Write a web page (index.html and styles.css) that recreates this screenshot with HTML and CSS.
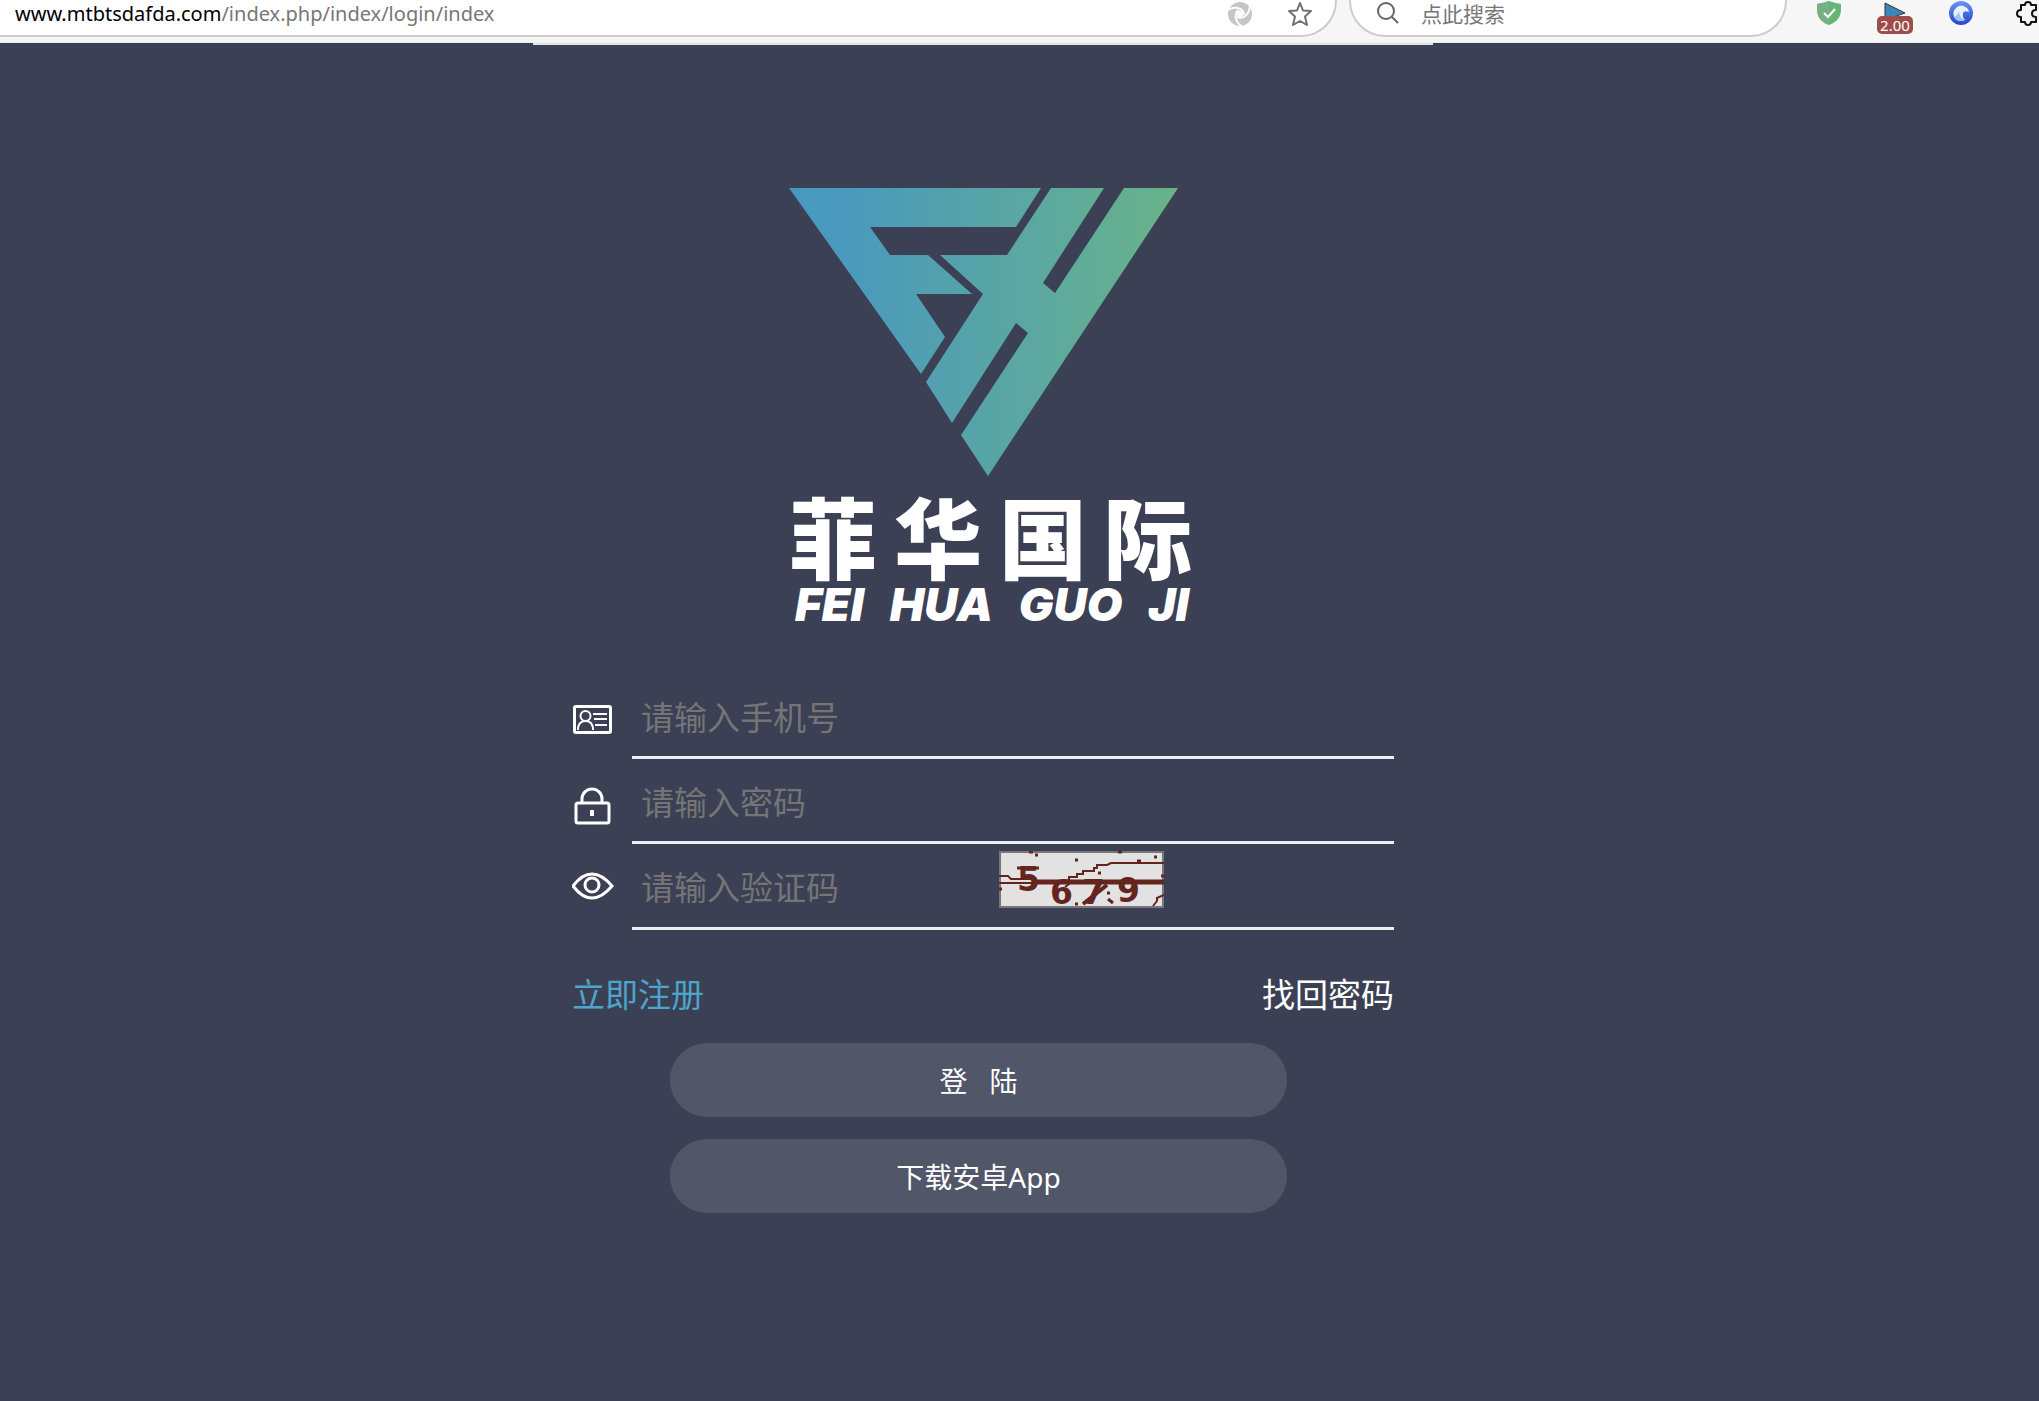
FILE: index.html
```html
<!DOCTYPE html>
<html lang="zh-CN">
<head>
<meta charset="utf-8">
<title>菲华国际</title>
<link rel="stylesheet" href="styles.css">
</head>
<body>
<header class="toolbar">
  <div class="address">
    <a class="url" href="#"><span class="host">www.mtbtsdafda.com</span>/index.php/index/login/index</a>
    <button class="tool" type="button" aria-label="兼容模式">
      <svg width="26" height="26" viewBox="0 0 26 26"><circle cx="13" cy="13" r="12" fill="#c6c6c6"/><g fill="none" stroke="#fff" stroke-width="2"><path d="M0 9Q8 5 13 8Q17 10 17 14"/><path d="M0 9Q8 5 13 8Q17 10 17 14" transform="rotate(120 13 13)"/><path d="M0 9Q8 5 13 8Q17 10 17 14" transform="rotate(240 13 13)"/></g><circle cx="13" cy="13" r="3" fill="#fff"/></svg>
    </button>
    <button class="tool" type="button" aria-label="收藏">
      <svg width="26" height="26" viewBox="0 0 26 26" fill="none" stroke="#707070" stroke-width="2" stroke-linejoin="round"><path d="M13 2L16 9.500L24 10L18 15.500L20 24L13 20L6 24L8 15.500L2 10L10 9.500Z"/></svg>
    </button>
  </div>
  <label class="search">
    <svg width="24" height="24" viewBox="0 0 24 24" fill="none" stroke="#666" stroke-width="2"><circle cx="9" cy="9" r="8"/><path d="M14.500 14.500L21 21"/></svg>
    <input class="search-input" type="search" placeholder="点此搜索" aria-label="点此搜索">
  </label>
  <nav class="extensions">
    <button class="tool" type="button" aria-label="安全防护">
      <svg width="24" height="26" viewBox="0 0 24 26"><path d="M12 1Q17 3 24 4V11Q23 21 12 25Q1 21 0 11V4Q7 3 12 1Z" fill="#66b574"/><path d="M12 1Q7 3 0 4V11Q1 21 12 25Z" fill="#74b082"/><path d="M7 13L11 17L18 9" fill="none" stroke="#fff" stroke-width="2"/></svg>
    </button>
    <button class="tool speed" type="button" aria-label="播放速度">
      <svg width="24" height="26" viewBox="0 0 24 26"><path d="M2 3L22 13L2 20Z" fill="#3f86b8" stroke="#333"/></svg>
      <span class="badge">2.00</span>
    </button>
    <button class="tool" type="button" aria-label="扩展">
      <svg width="24" height="26" viewBox="0 0 24 26"><defs><linearGradient id="ball" x1="0" y1="0" x2="0" y2="1"><stop offset="0" stop-color="#6a94f0"/><stop offset="1" stop-color="#2547cf"/></linearGradient></defs><circle cx="12" cy="13" r="12" fill="url(#ball)"/><path d="M5 17Q3 11 8 7Q13 3 19 9L20 12Q15 10 14 13Q13 17 16 20Q9 23 5 17Z" fill="#e9f2fe"/><path d="M5 17Q9 15 10 11Q10 18 16 20Q9 23 5 17Z" fill="#9cc4f5"/></svg>
    </button>
    <button class="tool" type="button" aria-label="插件">
      <svg width="24" height="26" viewBox="0 0 24 26" fill="none" stroke="#111" stroke-width="2" stroke-linejoin="round"><path d="M6 5H10Q10 2 13 2Q16 2 16 5H21V10Q17 10 17 13.500Q17 17 21 17V22H16Q16 25 13 25Q10 25 10 22H6V17Q2 17 2 13.500Q2 10 6 10Z"/></svg>
    </button>
  </nav>
</header>
<main class="page">
  <section class="panel">
    <h1 class="brand">
      <svg class="mark" width="390" height="290" viewBox="0 0 390 290" aria-hidden="true">
        <defs><linearGradient id="g" gradientUnits="userSpaceOnUse" x1="0" y1="0" x2="390" y2="0"><stop offset="0" stop-color="#4798c2"/><stop offset=".18" stop-color="#4b9abb"/><stop offset=".5" stop-color="#57a4a8"/><stop offset="1" stop-color="#69b388"/></linearGradient></defs>
        <g fill="url(#g)"><path d="M0 0H252L227 39H81L101 67H139L183 106H127L156 149L132 186Z"/><path d="M262 0H315L254 95L266 105L335 0H389L199 288L172 247L239 145L227 135L163 235L137 194L194 106L151 67H218Z"/></g>
      </svg>
      <span class="brand-cn"><span>菲</span><span>华</span><span>国</span><span>际</span></span>
      <span class="brand-en"><span>FEI</span> <span>HUA</span> <span>GUO</span> <span>JI</span></span>
    </h1>
    <form class="form">
      <div class="field">
        <label class="field-icon" for="phone" aria-label="手机号"><svg width="42" height="42" viewBox="0 0 42 42" fill="none" stroke="#fff" stroke-width="2"><rect x="2" y="7" width="37" height="27" rx="2"/><rect x="3" y="8" width="35" height="25" rx="1"/><circle cx="13.500" cy="17" r="5"/><path d="M6 31Q6 22 13.500 22Q21 22 21 31M21 15H35M22 20H35M23 26H35"/></svg></label>
        <input class="input" id="phone" type="tel" placeholder="请输入手机号">
      </div>
      <div class="field">
        <label class="field-icon" for="password" aria-label="密码"><svg width="42" height="42" viewBox="0 0 42 42" fill="none" stroke="#fff" stroke-width="3"><rect x="4" y="19" width="33" height="20" rx="2"/><path d="M10 19V15A10 10 0 0 1 30 15V19"/><path d="M20 26V32" stroke-width="4"/></svg></label>
        <input class="input" id="password" type="password" placeholder="请输入密码">
      </div>
      <div class="field field-last">
        <label class="field-icon" for="captcha" aria-label="验证码"><svg width="42" height="42" viewBox="0 0 42 42" fill="none" stroke="#fff" stroke-width="3"><path d="M1 17Q10 5 20 5Q30 5 40 17Q30 29 20 29Q10 29 1 17Z"/><circle cx="20" cy="16" r="7"/></svg></label>
        <div class="captcha-line">
          <input class="input captcha-input" id="captcha" type="text" placeholder="请输入验证码">
          <svg class="captcha" width="165" height="57" viewBox="0 0 165 57" role="img" aria-label="验证码图片">
            <rect x="1" y="1" width="163" height="55" fill="#e2e2e2" stroke="#777" stroke-width="2"/>
            <g class="captcha-digits"><text x="18" y="40">5</text><text x="51" y="53">6</text><text x="83" y="53">7</text><text x="118" y="51">9</text></g>
            <g fill="none" stroke="#65251f" stroke-width="2"><path d="M0 25H9L12 28H36M0 32H38M66 36L70 33V26H78V23H84V20H95V17H98V14H108L112 12H165M154 55L158 50V47L165 44"/><path d="M84 53L108 34" stroke-width="4"/><path d="M18 17H40" stroke-width="3"/><path d="M36 31H165" stroke-width="5"/><path d="M30 1H34M36 4H39M76 9H79M99 22H102M119 1H123M138 10H142M155 6H158M0 38H3M108 42H111M109 48L114 52M76 53H79M162 25H165" stroke-width="3"/></g>
          </svg>
        </div>
      </div>
      <div class="links"><a class="register" href="#">立即注册</a><a class="recover" href="#">找回密码</a></div>
      <div class="actions">
        <button class="action" type="submit">登&nbsp;&nbsp; 陆</button>
        <button class="action" type="button">下载安卓App</button>
      </div>
    </form>
  </section>
</main>
</body>
</html>
```
FILE: styles.css
```css
* { box-sizing: border-box; }
body { margin: 0; min-height: 100vh; background: #3b4054; font-family: "Noto Sans", "Noto Sans CJK SC", sans-serif; }
button, input { font: inherit; }
button { border: 0; padding: 0; cursor: pointer; }
a { text-decoration: none; }
svg { display: block; flex: none; }

.toolbar { display: flex; gap: 12px; height: 43px; padding-bottom: 5px; background: #f6f6f6; border-bottom: 1px solid #e8ecea; }
.address { flex: 1; display: flex; align-items: center; gap: 34px; padding: 0 22px 8px 15px; background: #fff; border: solid #ccc; border-width: 0 2px 2px 0; border-radius: 0 0 36px 0; }
.url { flex: 1; font-size: 20px; line-height: 26px; color: #777; }
.host { color: #000; }
.tool { position: relative; background: none; }
.search { display: flex; align-items: center; gap: 20px; width: 438px; padding: 0 26px 8px; background: #fff; border: solid #ccc; border-width: 0 2px 2px; border-radius: 0 0 36px 36px; }
.search-input { flex: 1; min-width: 0; border: 0; padding: 0; background: none; font-size: 21px; line-height: 26px; outline: 0; }
.search-input::placeholder { color: #777; opacity: 1; }
.extensions { display: flex; align-items: flex-start; gap: 42px; padding-left: 18px; }
.badge { position: absolute; left: -6px; top: 16px; width: 36px; height: 18px; border-radius: 5px; background: #9f4d4b; color: #fff; font-size: 15px; line-height: 18px; }

.page { display: flex; justify-content: center; padding-right: 73px; }
.panel { width: 900px; padding: 143px 39px 60px; border-top: 2px solid #e4e6e8; }

.brand { display: flex; flex-direction: column; width: 404px; margin: 0 auto 50px; padding-left: 8px; color: #fff; }
.brand-cn { display: flex; gap: 17px; margin-top: 14px; font-size: 88px; line-height: 92px; font-weight: 900; }
.brand-en { display: flex; justify-content: space-between; width: 400px; padding-left: 6px; font: italic 900 46px/40px "Inter", sans-serif; white-space: nowrap; }

.form { display: flex; flex-direction: column; }
.field { display: flex; height: 85px; align-items: center; }
.field-last { height: 86px; }
.field-icon { width: 60px; padding-top: 6px; }
.input { flex: 1; min-width: 0; height: 85px; border: 0; border-bottom: 3px solid #eeeef0; border-radius: 0; padding: 5px 10px 0 9px; background: none; color: #fff; font-size: 33px; outline: 0; }
.input::placeholder { color: #757575; opacity: 1; }
.captcha-line { flex: 1; display: flex; height: 86px; border-bottom: 3px solid #eeeef0; }
.captcha-input { flex: 0 0 367px; height: 83px; padding-top: 3px; border: 0; }
.captcha { margin-top: 7px; }
.captcha-digits { fill: #65251f; font: bold 33px "DejaVu Sans", sans-serif; }

.links { display: flex; justify-content: space-between; padding-top: 41px; font-size: 33px; line-height: 48px; }
.register { color: #4da5ca; }
.recover { color: #fff; }
.actions { display: flex; flex-direction: column; gap: 22px; margin: 24px 107px 0 98px; }
.action { height: 74px; border-radius: 37px; background: #515669; color: #fff; font-size: 28px; }
```
